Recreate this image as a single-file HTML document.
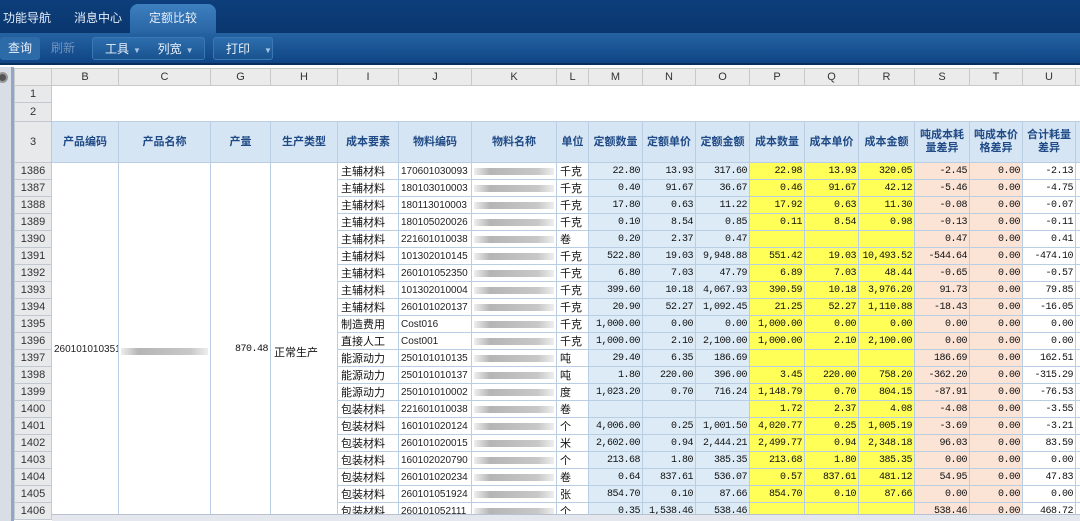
<!DOCTYPE html>
<html><head><meta charset="utf-8"><style>
*{margin:0;padding:0;box-sizing:border-box}
body{width:1080px;height:521px;overflow:hidden;background:#fff;font-family:"Liberation Sans","Noto Sans CJK SC",sans-serif;position:relative}
#tabs{position:absolute;left:0;top:0;width:1080px;height:33px;background:linear-gradient(#0d3f7c,#0a366e)}
.tab{position:absolute;top:6px;height:27px;color:#e6eef8;font-size:12px;line-height:24px}
#act{left:130px;width:86px;top:4px;height:29px;background:linear-gradient(#3d7fbf,#2865a5);border-radius:8px 8px 0 0;text-align:center;line-height:28px}
#tb{position:absolute;left:0;top:33px;width:1080px;height:32px;background:linear-gradient(#2563a3,#0f4584);border-bottom:2px solid #0a2f5e}
.btn{position:absolute;top:4px;height:23px;line-height:23px;font-size:12px;color:#eaf1fa;text-align:center;border-radius:3px}
.grp{background:linear-gradient(#2e6eae,#19538f);border:1px solid #3a77b5}
.ar{font-size:8px;color:#a8c4e4;margin-left:4px}
#strip{position:absolute;left:0;top:67px;width:14px;height:454px;background:#d9dee6;border-right:3px solid #8fa8c8}
#circ{position:absolute;left:-3px;top:72px;width:11px;height:11px;border-radius:50%;background:#555;border:2px solid #999}
table{position:absolute;left:14px;top:68px;width:1071px;border-collapse:collapse;table-layout:fixed;font-size:11px}
td{border:1px solid #b9cde3;height:17px;padding:0 3px;white-space:nowrap;overflow:hidden;color:#111}
tr.ch td{background:#ebebeb;border-color:#c9c9c9;text-align:center;color:#333;height:17px}
td.rn{background:#e8e9eb;border-color:#c3c8d0;text-align:center;color:#333}
tr.h3 td{background:#d6e5f3;color:#1f4a86;font-weight:bold;text-align:center;height:41px;line-height:13px}
tr.h3 td.rn{background:#e8e9eb;color:#333;font-weight:normal}
.n{text-align:right;font-family:"Liberation Mono",monospace;font-size:10px;letter-spacing:-0.5px;padding:0 2px}
.c{font-family:"Liberation Sans",sans-serif;font-size:10px;color:#222;padding:0 2px}
.b{background:#dcebf6}.y{background:#ffff58}.p{background:#fbe3d5}
.bl{padding:0 2px}.bl div{height:7px;background:linear-gradient(90deg,#eee,#b5b5b5 20%,#c8c8c8 80%,#eee)}
#sb{position:absolute;left:52px;top:514px;width:1028px;height:7px;background:#e4e8ee;border-top:1px solid #b8c2cf}
</style></head><body>
<div id="tabs">
<div class="tab" style="left:3px">功能导航</div>
<div class="tab" style="left:74px">消息中心</div>
<div class="tab" id="act">定额比较</div>
</div>
<div id="tb">
<div class="btn" style="left:0;width:40px;background:#2d6aa8">查询</div>
<div class="btn" style="left:45px;width:36px;color:#6f93bd">刷新</div>
<div class="btn grp" style="left:92px;width:113px;text-align:left;padding-left:12px">工具<span class="ar">▼</span>&nbsp;&nbsp;&nbsp;&nbsp;&nbsp;列宽<span class="ar">▼</span></div>
<div class="btn grp" style="left:213px;width:60px;text-align:left;padding-left:12px">打印&nbsp;&nbsp;&nbsp;<span class="ar">▼</span></div>
</div>
<div id="strip"></div><div id="circ"></div>
<table>
<colgroup><col style="width:37px"><col style="width:67px"><col style="width:92px"><col style="width:60px"><col style="width:67px"><col style="width:61px"><col style="width:73px"><col style="width:85px"><col style="width:32px"><col style="width:54px"><col style="width:53px"><col style="width:54px"><col style="width:55px"><col style="width:54px"><col style="width:56px"><col style="width:55px"><col style="width:53px"><col style="width:53px"><col style="width:10px"></colgroup>
<tr class="ch"><td></td><td>B</td><td>C</td><td>G</td><td>H</td><td>I</td><td>J</td><td>K</td><td>L</td><td>M</td><td>N</td><td>O</td><td>P</td><td>Q</td><td>R</td><td>S</td><td>T</td><td>U</td><td></td></tr>
<tr><td class="rn">1</td><td colspan="18" style="border:none"></td></tr>
<tr><td class="rn" style="height:19px">2</td><td colspan="18" style="border:none;border-bottom:1px solid #b9cde3"></td></tr>
<tr class="h3"><td class="rn">3</td><td>产品编码</td><td>产品名称</td><td>产量</td><td>生产类型</td><td>成本要素</td><td>物料编码</td><td>物料名称</td><td>单位</td><td>定额数量</td><td>定额单价</td><td>定额金额</td><td>成本数量</td><td>成本单价</td><td>成本金额</td><td>吨成本耗<br>量差异</td><td>吨成本价<br>格差异</td><td>合计耗量<br>差异</td><td></td></tr>
<tr><td class="rn">1386</td><td rowspan="21" class="c" style="vertical-align:top;padding-top:181px">260101010351</td><td rowspan="21" class="bl" style="vertical-align:top;padding-top:185px"><div></div></td><td rowspan="21" class="n" style="vertical-align:top;padding-top:181px">870.48</td><td rowspan="21" style="vertical-align:top;padding-top:181px">正常生产</td><td>主辅材料</td><td class="c">170601030093</td><td class="bl"><div></div></td><td>千克</td><td class="n b">22.80</td><td class="n b">13.93</td><td class="n b">317.60</td><td class="n y">22.98</td><td class="n y">13.93</td><td class="n y">320.05</td><td class="n p">-2.45</td><td class="n p">0.00</td><td class="n">-2.13</td><td></td></tr>
<tr><td class="rn">1387</td><td>主辅材料</td><td class="c">180103010003</td><td class="bl"><div></div></td><td>千克</td><td class="n b">0.40</td><td class="n b">91.67</td><td class="n b">36.67</td><td class="n y">0.46</td><td class="n y">91.67</td><td class="n y">42.12</td><td class="n p">-5.46</td><td class="n p">0.00</td><td class="n">-4.75</td><td></td></tr>
<tr><td class="rn">1388</td><td>主辅材料</td><td class="c">180113010003</td><td class="bl"><div></div></td><td>千克</td><td class="n b">17.80</td><td class="n b">0.63</td><td class="n b">11.22</td><td class="n y">17.92</td><td class="n y">0.63</td><td class="n y">11.30</td><td class="n p">-0.08</td><td class="n p">0.00</td><td class="n">-0.07</td><td></td></tr>
<tr><td class="rn">1389</td><td>主辅材料</td><td class="c">180105020026</td><td class="bl"><div></div></td><td>千克</td><td class="n b">0.10</td><td class="n b">8.54</td><td class="n b">0.85</td><td class="n y">0.11</td><td class="n y">8.54</td><td class="n y">0.98</td><td class="n p">-0.13</td><td class="n p">0.00</td><td class="n">-0.11</td><td></td></tr>
<tr><td class="rn">1390</td><td>主辅材料</td><td class="c">221601010038</td><td class="bl"><div></div></td><td>卷</td><td class="n b">0.20</td><td class="n b">2.37</td><td class="n b">0.47</td><td class="n y"></td><td class="n y"></td><td class="n y"></td><td class="n p">0.47</td><td class="n p">0.00</td><td class="n">0.41</td><td></td></tr>
<tr><td class="rn">1391</td><td>主辅材料</td><td class="c">101302010145</td><td class="bl"><div></div></td><td>千克</td><td class="n b">522.80</td><td class="n b">19.03</td><td class="n b">9,948.88</td><td class="n y">551.42</td><td class="n y">19.03</td><td class="n y">10,493.52</td><td class="n p">-544.64</td><td class="n p">0.00</td><td class="n">-474.10</td><td></td></tr>
<tr><td class="rn">1392</td><td>主辅材料</td><td class="c">260101052350</td><td class="bl"><div></div></td><td>千克</td><td class="n b">6.80</td><td class="n b">7.03</td><td class="n b">47.79</td><td class="n y">6.89</td><td class="n y">7.03</td><td class="n y">48.44</td><td class="n p">-0.65</td><td class="n p">0.00</td><td class="n">-0.57</td><td></td></tr>
<tr><td class="rn">1393</td><td>主辅材料</td><td class="c">101302010004</td><td class="bl"><div></div></td><td>千克</td><td class="n b">399.60</td><td class="n b">10.18</td><td class="n b">4,067.93</td><td class="n y">390.59</td><td class="n y">10.18</td><td class="n y">3,976.20</td><td class="n p">91.73</td><td class="n p">0.00</td><td class="n">79.85</td><td></td></tr>
<tr><td class="rn">1394</td><td>主辅材料</td><td class="c">260101020137</td><td class="bl"><div></div></td><td>千克</td><td class="n b">20.90</td><td class="n b">52.27</td><td class="n b">1,092.45</td><td class="n y">21.25</td><td class="n y">52.27</td><td class="n y">1,110.88</td><td class="n p">-18.43</td><td class="n p">0.00</td><td class="n">-16.05</td><td></td></tr>
<tr><td class="rn">1395</td><td>制造费用</td><td class="c">Cost016</td><td class="bl"><div></div></td><td>千克</td><td class="n b">1,000.00</td><td class="n b">0.00</td><td class="n b">0.00</td><td class="n y">1,000.00</td><td class="n y">0.00</td><td class="n y">0.00</td><td class="n p">0.00</td><td class="n p">0.00</td><td class="n">0.00</td><td></td></tr>
<tr><td class="rn">1396</td><td>直接人工</td><td class="c">Cost001</td><td class="bl"><div></div></td><td>千克</td><td class="n b">1,000.00</td><td class="n b">2.10</td><td class="n b">2,100.00</td><td class="n y">1,000.00</td><td class="n y">2.10</td><td class="n y">2,100.00</td><td class="n p">0.00</td><td class="n p">0.00</td><td class="n">0.00</td><td></td></tr>
<tr><td class="rn">1397</td><td>能源动力</td><td class="c">250101010135</td><td class="bl"><div></div></td><td>吨</td><td class="n b">29.40</td><td class="n b">6.35</td><td class="n b">186.69</td><td class="n y"></td><td class="n y"></td><td class="n y"></td><td class="n p">186.69</td><td class="n p">0.00</td><td class="n">162.51</td><td></td></tr>
<tr><td class="rn">1398</td><td>能源动力</td><td class="c">250101010137</td><td class="bl"><div></div></td><td>吨</td><td class="n b">1.80</td><td class="n b">220.00</td><td class="n b">396.00</td><td class="n y">3.45</td><td class="n y">220.00</td><td class="n y">758.20</td><td class="n p">-362.20</td><td class="n p">0.00</td><td class="n">-315.29</td><td></td></tr>
<tr><td class="rn">1399</td><td>能源动力</td><td class="c">250101010002</td><td class="bl"><div></div></td><td>度</td><td class="n b">1,023.20</td><td class="n b">0.70</td><td class="n b">716.24</td><td class="n y">1,148.79</td><td class="n y">0.70</td><td class="n y">804.15</td><td class="n p">-87.91</td><td class="n p">0.00</td><td class="n">-76.53</td><td></td></tr>
<tr><td class="rn">1400</td><td>包装材料</td><td class="c">221601010038</td><td class="bl"><div></div></td><td>卷</td><td class="n b"></td><td class="n b"></td><td class="n b"></td><td class="n y">1.72</td><td class="n y">2.37</td><td class="n y">4.08</td><td class="n p">-4.08</td><td class="n p">0.00</td><td class="n">-3.55</td><td></td></tr>
<tr><td class="rn">1401</td><td>包装材料</td><td class="c">160101020124</td><td class="bl"><div></div></td><td>个</td><td class="n b">4,006.00</td><td class="n b">0.25</td><td class="n b">1,001.50</td><td class="n y">4,020.77</td><td class="n y">0.25</td><td class="n y">1,005.19</td><td class="n p">-3.69</td><td class="n p">0.00</td><td class="n">-3.21</td><td></td></tr>
<tr><td class="rn">1402</td><td>包装材料</td><td class="c">260101020015</td><td class="bl"><div></div></td><td>米</td><td class="n b">2,602.00</td><td class="n b">0.94</td><td class="n b">2,444.21</td><td class="n y">2,499.77</td><td class="n y">0.94</td><td class="n y">2,348.18</td><td class="n p">96.03</td><td class="n p">0.00</td><td class="n">83.59</td><td></td></tr>
<tr><td class="rn">1403</td><td>包装材料</td><td class="c">160102020790</td><td class="bl"><div></div></td><td>个</td><td class="n b">213.68</td><td class="n b">1.80</td><td class="n b">385.35</td><td class="n y">213.68</td><td class="n y">1.80</td><td class="n y">385.35</td><td class="n p">0.00</td><td class="n p">0.00</td><td class="n">0.00</td><td></td></tr>
<tr><td class="rn">1404</td><td>包装材料</td><td class="c">260101020234</td><td class="bl"><div></div></td><td>卷</td><td class="n b">0.64</td><td class="n b">837.61</td><td class="n b">536.07</td><td class="n y">0.57</td><td class="n y">837.61</td><td class="n y">481.12</td><td class="n p">54.95</td><td class="n p">0.00</td><td class="n">47.83</td><td></td></tr>
<tr><td class="rn">1405</td><td>包装材料</td><td class="c">260101051924</td><td class="bl"><div></div></td><td>张</td><td class="n b">854.70</td><td class="n b">0.10</td><td class="n b">87.66</td><td class="n y">854.70</td><td class="n y">0.10</td><td class="n y">87.66</td><td class="n p">0.00</td><td class="n p">0.00</td><td class="n">0.00</td><td></td></tr>
<tr><td class="rn">1406</td><td>包装材料</td><td class="c">260101052111</td><td class="bl"><div></div></td><td>个</td><td class="n b">0.35</td><td class="n b">1,538.46</td><td class="n b">538.46</td><td class="n y"></td><td class="n y"></td><td class="n y"></td><td class="n p">538.46</td><td class="n p">0.00</td><td class="n">468.72</td><td></td></tr>
</table>
<div id="sb"></div>
</body></html>
